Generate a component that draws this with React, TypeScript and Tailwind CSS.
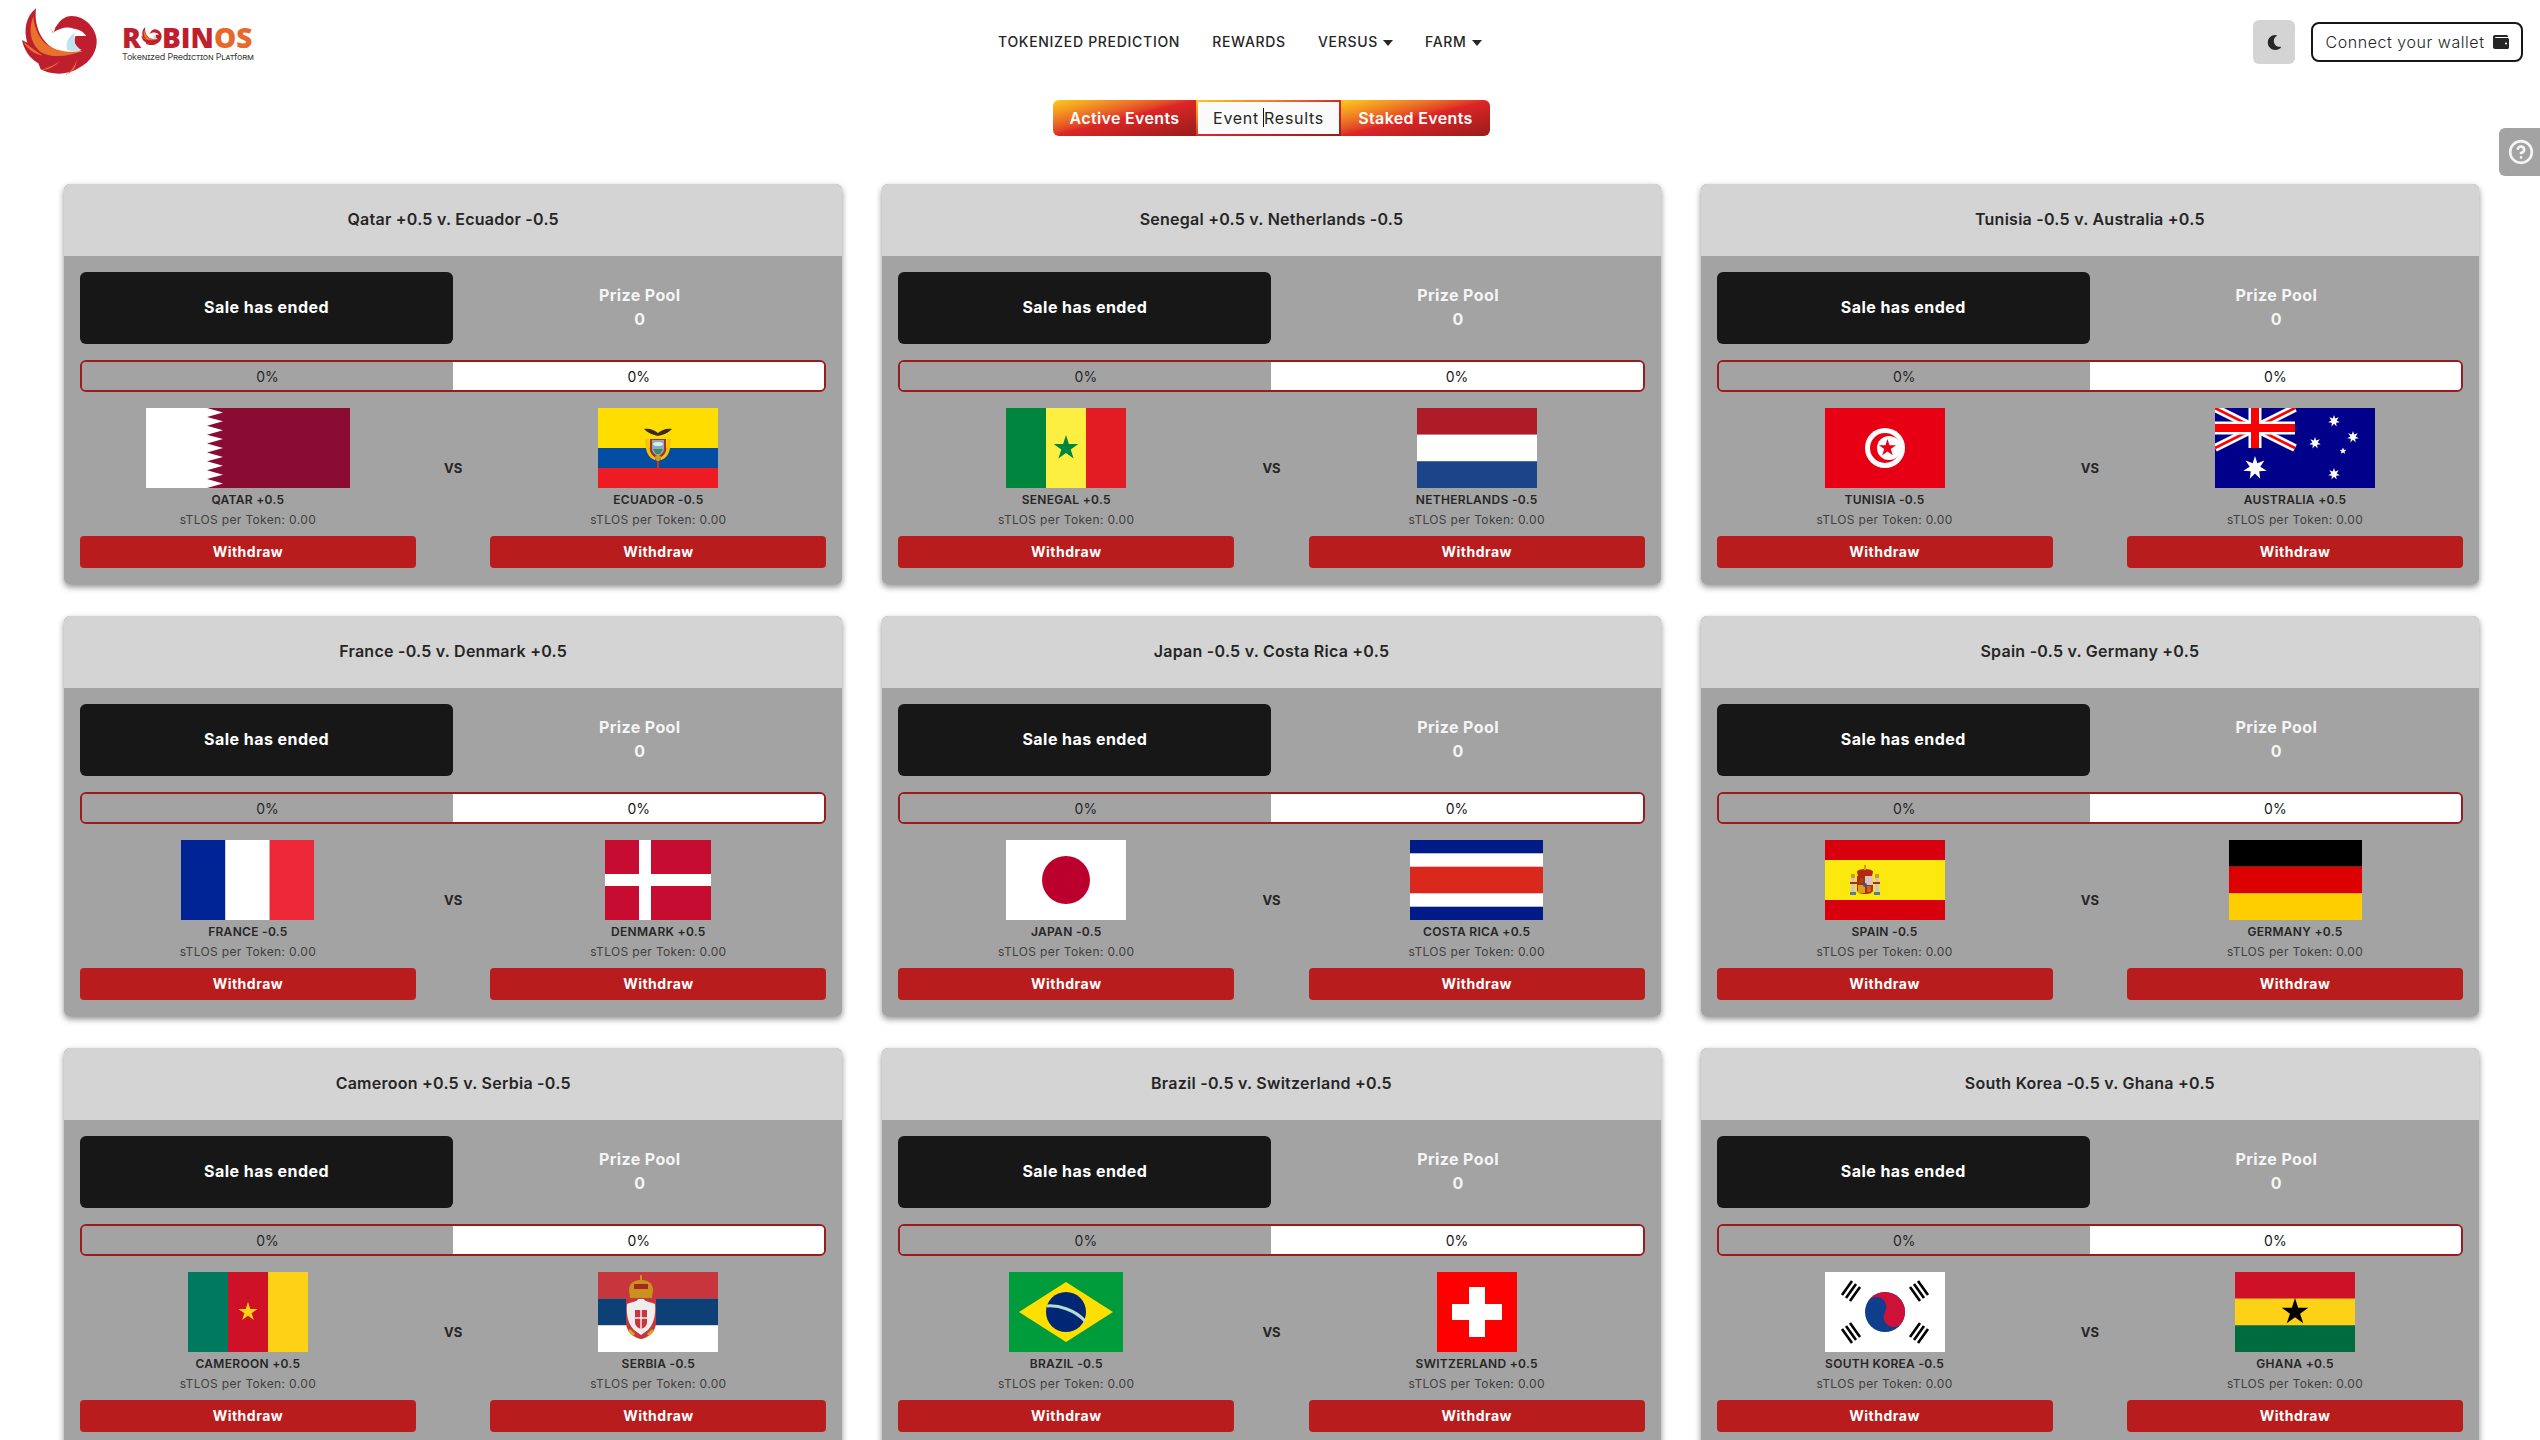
import { CircleHelp } from "lucide-react";
import { FaMoon, FaWallet } from "react-icons/fa";

function star(cx: number, cy: number, r: number, n = 5, inner = 0.382) {
  const pts: string[] = [];
  for (let i = 0; i < n * 2; i++) {
    const rad = i % 2 === 0 ? r : r * inner;
    const a = (Math.PI * i) / n - Math.PI / 2;
    pts.push(`${(cx + rad * Math.cos(a)).toFixed(2)},${(cy + rad * Math.sin(a)).toFixed(2)}`);
  }
  return pts.join(" ");
}

function Stripes({ w, colors, vertical }: { w: number; colors: string[]; vertical?: boolean }) {
  return (
    <>
      {colors.map((c, i) =>
        vertical ? (
          <rect key={i} x={(w / colors.length) * i} y={0} width={w / colors.length} height={80} fill={c} />
        ) : (
          <rect key={i} x={0} y={(80 / colors.length) * i} width={w} height={80 / colors.length} fill={c} />
        )
      )}
    </>
  );
}

function qatarEdge() {
  const pts = ["0,0", "61,0"];
  const step = 80 / 9;
  for (let i = 0; i < 9; i++) {
    pts.push(`77,${(step * i + step / 2).toFixed(2)}`);
    pts.push(`61,${(step * (i + 1)).toFixed(2)}`);
  }
  pts.push("0,80");
  return pts.join(" ");
}

const flags: Record<string, { w: number; draw: React.ReactNode }> = {
  qatar: {
    w: 204,
    draw: (
      <>
        <rect width="204" height="80" fill="#8a0c35" />
        <polygon points={qatarEdge()} fill="#fff" />
      </>
    ),
  },
  ecuador: {
    w: 120,
    draw: (
      <>
        <rect width="120" height="40" fill="#ffdd00" />
        <rect y="40" width="120" height="20" fill="#034ea2" />
        <rect y="60" width="120" height="20" fill="#ed1c24" />
        <path d="M46 21 C52 20 56 22 60 25 C64 22 68 20 74 21 C70 25 65 27 60 28 C55 27 50 25 46 21Z" fill="#3b2a1e" />
        <path d="M47 31 C47 42 50 50 57 52 L57 49 C52 46 51 40 51 31Z" fill="#f5c400" />
        <path d="M73 31 C73 42 70 50 63 52 L63 49 C68 46 69 40 69 31Z" fill="#f5c400" />
        <path d="M52 31 L68 31 L68 41 C68 46 64 49 60 50 C56 49 52 46 52 41Z" fill="#b52a2a" />
        <path d="M54 32 L66 32 L66 41 C66 44 63 47 60 48 C57 47 54 44 54 41Z" fill="#7fb0c4" />
        <ellipse cx="60" cy="36" rx="5" ry="2" fill="#e8e8e8" />
        <path d="M55 41 L65 41 L62 46 L58 46Z" fill="#3d8a5a" />
        <rect x="59" y="50" width="2" height="10" fill="#c0392b" />
        <circle cx="60" cy="50" r="3" fill="#d99a1c" />
      </>
    ),
  },
  senegal: {
    w: 120,
    draw: (
      <>
        <Stripes w={120} colors={["#00853f", "#fdef42", "#e31b23"]} vertical />
        <polygon points={star(60, 40, 13)} fill="#00853f" />
      </>
    ),
  },
  netherlands: {
    w: 120,
    draw: <Stripes w={120} colors={["#ae1c28", "#ffffff", "#1c4589"]} />,
  },
  tunisia: {
    w: 120,
    draw: (
      <>
        <rect width="120" height="80" fill="#e70013" />
        <circle cx="60" cy="40" r="20" fill="#fff" />
        <circle cx="60" cy="40" r="15" fill="#e70013" />
        <circle cx="64" cy="40" r="12" fill="#fff" />
        <polygon points={star(62.5, 40, 9)} fill="#e70013" />
      </>
    ),
  },
  australia: {
    w: 160,
    draw: (
      <>
        <rect width="160" height="80" fill="#00008b" />
        <path d="M0 0 L80 40 M80 0 L0 40" stroke="#fff" strokeWidth="8" />
        <path d="M0 0 L80 40 M80 0 L0 40" stroke="#ff0000" strokeWidth="2.6" />
        <path d="M40 0 V40 M0 20 H80" stroke="#fff" strokeWidth="13" />
        <path d="M40 0 V40 M0 20 H80" stroke="#ff0000" strokeWidth="8" />
        <polygon points={star(40, 60, 12, 7, 0.45)} fill="#fff" />
        <polygon points={star(119, 13, 6, 7, 0.45)} fill="#fff" />
        <polygon points={star(138, 29, 6, 7, 0.45)} fill="#fff" />
        <polygon points={star(100, 35, 6, 7, 0.45)} fill="#fff" />
        <polygon points={star(128, 43, 3.5, 5, 0.45)} fill="#fff" />
        <polygon points={star(119, 66, 6, 7, 0.45)} fill="#fff" />
      </>
    ),
  },
  france: {
    w: 133,
    draw: <Stripes w={133} colors={["#002395", "#ffffff", "#ed2939"]} vertical />,
  },
  denmark: {
    w: 106,
    draw: (
      <>
        <rect width="106" height="80" fill="#c60c30" />
        <rect x="34" width="12" height="80" fill="#fff" />
        <rect y="34" width="106" height="12" fill="#fff" />
      </>
    ),
  },
  japan: {
    w: 120,
    draw: (
      <>
        <rect width="120" height="80" fill="#fff" />
        <circle cx="60" cy="40" r="24" fill="#bc002d" />
      </>
    ),
  },
  costarica: {
    w: 133,
    draw: (
      <>
        <rect width="133" height="80" fill="#001a87" />
        <rect y="13.3" width="133" height="53.4" fill="#fff" />
        <rect y="26.7" width="133" height="26.6" fill="#da291c" />
      </>
    ),
  },
  spain: {
    w: 120,
    draw: (
      <>
        <rect width="120" height="80" fill="#d8000c" />
        <rect y="20" width="120" height="40" fill="#fbe90e" />
        <path d="M32 32 C32 28 48 28 48 32 L47 36 L33 36Z" fill="#b5290f" />
        <rect x="39" y="25" width="2" height="5" fill="#c8a11c" />
        <path d="M32 36 H48 V50 C48 53 44 54 40 54 C36 54 32 53 32 50Z" fill="#b5290f" />
        <rect x="40" y="36" width="8" height="9" fill="#d9c3c3" />
        <rect x="33" y="45" width="7" height="8" fill="#d9a21c" />
        <rect x="35" y="38" width="3" height="5" fill="#7a5a1c" />
        <rect x="42" y="46" width="4" height="6" fill="#c2661a" />
        <circle cx="40" cy="45" r="2" fill="#2c5a9c" />
        <rect x="26" y="35" width="4" height="19" fill="#c9c9c9" />
        <rect x="50" y="35" width="4" height="19" fill="#c9c9c9" />
        <rect x="26" y="34" width="4" height="4" fill="#c8a11c" />
        <rect x="50" y="34" width="4" height="4" fill="#c8a11c" />
        <rect x="25" y="52" width="6" height="3" fill="#5a7a9c" />
        <rect x="49" y="52" width="6" height="3" fill="#5a7a9c" />
        <rect x="25" y="42" width="7" height="2" fill="#b5290f" />
        <rect x="48" y="42" width="7" height="2" fill="#b5290f" />
      </>
    ),
  },
  germany: {
    w: 133,
    draw: <Stripes w={133} colors={["#000000", "#dd0000", "#ffce00"]} />,
  },
  cameroon: {
    w: 120,
    draw: (
      <>
        <Stripes w={120} colors={["#007a5e", "#ce1126", "#fcd116"]} vertical />
        <polygon points={star(60, 40, 10)} fill="#fcd116" />
      </>
    ),
  },
  serbia: {
    w: 120,
    draw: (
      <>
        <Stripes w={120} colors={["#c6363c", "#0c4076", "#ffffff"]} />
        <path d="M31 18 C31 10 38 8 43 8 C48 8 55 10 55 18 L54 26 H32Z" fill="#c8921c" />
        <path d="M36 12 H50 V17 H36Z" fill="#a8261f" />
        <rect x="42" y="3" width="2" height="6" fill="#c8921c" />
        <path d="M28 26 H58 V50 C58 60 50 66 43 67 C36 66 28 60 28 50Z" fill="#c6363c" />
        <path d="M29 32 C36 29 39 30 40 27 H46 C47 30 50 29 57 32 C58 42 56 52 50 58 L43 63 L36 58 C30 52 28 42 29 32Z" fill="#ededed" />
        <path d="M37 38 H49 V50 C49 54 46 56 43 57 C40 56 37 54 37 50Z" fill="#c6363c" />
        <path d="M43 38 V57 M37 46 H49" stroke="#eee" strokeWidth="1.5" />
        <path d="M31 58 L36 63 M55 58 L50 63" stroke="#d9a21c" strokeWidth="3" />
      </>
    ),
  },
  brazil: {
    w: 114,
    draw: (
      <>
        <rect width="114" height="80" fill="#009b3a" />
        <polygon points="10,40 57,10 104,40 57,70" fill="#fedf00" />
        <circle cx="57" cy="40" r="20" fill="#002776" />
        <path d="M38 34 C50 33 66 38 76 49" stroke="#b8dcc8" strokeWidth="3" fill="none" />
      </>
    ),
  },
  switzerland: {
    w: 80,
    draw: (
      <>
        <rect width="80" height="80" fill="#ff0000" />
        <rect x="32" y="15" width="16" height="50" fill="#fff" />
        <rect x="15" y="32" width="50" height="16" fill="#fff" />
      </>
    ),
  },
  korea: {
    w: 120,
    draw: (
      <>
        <rect width="120" height="80" fill="#fff" />
        <circle cx="60" cy="40" r="20" fill="#0f3f8c" />
        <path d="M40 40 A20 20 0 0 1 80 40 A10 10 0 0 1 60 40 A10 10 0 0 0 40 40Z" fill="#cd1139" transform="rotate(30 60 40)" />
        <g stroke="#000" strokeWidth="2.6" fill="none">
          <path d="M28 10 L18 24 M32 13 L22 27 M36 16 L26 30" transform="translate(-1 -1)" />
          <path d="M92 10 L102 24 M88 13 L98 27 M84 16 L94 30" transform="translate(1 -1)" />
          <path d="M28 70 L18 56 M32 67 L22 53 M36 64 L26 50" transform="translate(-1 1)" />
          <path d="M92 70 L102 56 M88 67 L98 53 M84 64 L94 50" transform="translate(1 1)" />
        </g>
      </>
    ),
  },
  ghana: {
    w: 120,
    draw: (
      <>
        <Stripes w={120} colors={["#ce1126", "#fcd116", "#006b3f"]} />
        <polygon points={star(60, 40, 14)} fill="#000" />
      </>
    ),
  },
};

function Flag({ name }: { name: string }) {
  const f = flags[name];
  return (
    <svg width={f.w} height={80} viewBox={`0 0 ${f.w} 80`} className="block">
      {f.draw}
    </svg>
  );
}

function Logo({ size = 110 }: { size?: number }) {
  return (
    <svg width={size} height={(size * 85) / 110} viewBox="0 0 330 255" className="block shrink-0">
      <path
        d="M78 25 C48 48 40 90 52 128 L36 120 C42 150 58 174 85 190 L92 208 C120 224 170 228 205 205 C245 185 262 150 260 120 C258 85 225 48 185 48 C165 48 145 60 130 98 L78 25Z"
        fill="#be1e2d"
      />
      <path
        d="M78 25 C70 90 105 150 170 160 L216 154 C196 150 190 130 196 108 L229 108 C218 92 205 88 192 86 C170 78 150 85 128 98 L100 40Z"
        fill="#fff"
      />
      <path d="M70 48 C55 90 60 122 85 150 C110 175 170 172 218 153 C170 160 125 150 100 125 C80 100 72 75 70 48Z" fill="#e8722c" />
      <path d="M172 150 C165 130 175 108 195 98 C190 115 190 135 215 150 C200 154 185 154 172 150Z" fill="#bfe3ee" />
      <path d="M135 85 C150 62 170 58 190 62 C170 68 155 75 135 85Z" fill="#be1e2d" />
      <path d="M40 125 C55 150 75 162 98 167 C75 150 60 140 40 125Z" fill="#e8722c" />
      <path d="M90 210 C110 205 135 195 150 183 C135 200 115 210 90 210Z" fill="#e8722c" />
      <path d="M165 225 C185 215 195 195 200 180 C198 205 190 215 165 225Z" fill="#e8722c" />
    </svg>
  );
}

type Side = { flag: string; label: string };
type Match = { title: string; a: Side; b: Side };

const matches: Match[] = [
  { title: "Qatar +0.5 v. Ecuador -0.5", a: { flag: "qatar", label: "QATAR +0.5" }, b: { flag: "ecuador", label: "ECUADOR -0.5" } },
  { title: "Senegal +0.5 v. Netherlands -0.5", a: { flag: "senegal", label: "SENEGAL +0.5" }, b: { flag: "netherlands", label: "NETHERLANDS -0.5" } },
  { title: "Tunisia -0.5 v. Australia +0.5", a: { flag: "tunisia", label: "TUNISIA -0.5" }, b: { flag: "australia", label: "AUSTRALIA +0.5" } },
  { title: "France -0.5 v. Denmark +0.5", a: { flag: "france", label: "FRANCE -0.5" }, b: { flag: "denmark", label: "DENMARK +0.5" } },
  { title: "Japan -0.5 v. Costa Rica +0.5", a: { flag: "japan", label: "JAPAN -0.5" }, b: { flag: "costarica", label: "COSTA RICA +0.5" } },
  { title: "Spain -0.5 v. Germany +0.5", a: { flag: "spain", label: "SPAIN -0.5" }, b: { flag: "germany", label: "GERMANY +0.5" } },
  { title: "Cameroon +0.5 v. Serbia -0.5", a: { flag: "cameroon", label: "CAMEROON +0.5" }, b: { flag: "serbia", label: "SERBIA -0.5" } },
  { title: "Brazil -0.5 v. Switzerland +0.5", a: { flag: "brazil", label: "BRAZIL -0.5" }, b: { flag: "switzerland", label: "SWITZERLAND +0.5" } },
  { title: "South Korea -0.5 v. Ghana +0.5", a: { flag: "korea", label: "SOUTH KOREA -0.5" }, b: { flag: "ghana", label: "GHANA +0.5" } },
];

function Team({ side }: { side: Side }) {
  return (
    <div className="flex w-[45%] flex-col items-center">
      <Flag name={side.flag} />
      <p className="mt-[3px] text-[12px] leading-[18px] font-semibold tracking-[0.3px] text-[#262626]">{side.label}</p>
      <p className="mt-[2px] text-[12px] leading-[18px] tracking-[0.35px] text-[#404040]">sTLOS per Token: 0.00</p>
    </div>
  );
}

function MatchCard({ match }: { match: Match }) {
  return (
    <div className="h-[400px] overflow-hidden rounded-md bg-[#a3a3a3] shadow-[0_3px_6px_rgba(0,0,0,0.45)]">
      <div className="flex h-[72px] items-center justify-center bg-[#d4d4d4] pb-[2px] text-[16px] font-semibold tracking-[0.25px] text-[#262626]">
        {match.title}
      </div>
      <div className="px-4 pt-4">
        <div className="flex h-[72px]">
          <div className="flex w-1/2 items-center justify-center rounded-md bg-[#171717] pb-[2px] text-[16px] font-bold tracking-[0.45px] text-white">
            Sale has ended
          </div>
          <div className="flex w-1/2 flex-col items-center justify-center pb-[2px] text-[16px] leading-6 font-bold tracking-[0.4px] text-[#f5f5f5]">
            <span>Prize Pool</span>
            <span>0</span>
          </div>
        </div>
        <div className="mt-4 flex h-8 overflow-hidden rounded-md border-2 border-[#991b1b] text-[14px]">
          <div className="flex w-1/2 items-center justify-center bg-[#a3a3a3] text-[#262626]">0%</div>
          <div className="flex w-1/2 items-center justify-center bg-white text-[#171717]">0%</div>
        </div>
        <div className="mt-4 flex h-[120px] items-center">
          <Team side={match.a} />
          <div className="w-[10%] pt-[2px] text-center text-[13px] font-bold text-[#262626]">VS</div>
          <Team side={match.b} />
        </div>
        <div className="mt-2 flex justify-between">
          <button className="h-8 w-[45%] rounded-[4px] bg-[#b91c1c] pb-[1px] text-[14px] font-bold tracking-[0.5px] text-white">Withdraw</button>
          <button className="h-8 w-[45%] rounded-[4px] bg-[#b91c1c] pb-[1px] text-[14px] font-bold tracking-[0.5px] text-white">Withdraw</button>
        </div>
      </div>
    </div>
  );
}

function Caret() {
  return <span className="ml-[5px] inline-block h-0 w-0 border-x-[5px] border-t-[6px] border-x-transparent border-t-[#262626] align-middle" />;
}

export default function App() {
  return (
    <div className="relative h-screen overflow-hidden bg-white [font-family:Inter,sans-serif]">
      <header className="relative flex h-[85px] items-start px-[10px]">
        <Logo />
        <div className="ml-[2px] pt-[24px]">
          <div className="flex h-[26px] items-center text-[28px] leading-[26px] font-extrabold [font-family:'Open_Sans',sans-serif]">
            <span className="text-[#be1e2d]">R</span>
            <span className="-mr-[6px] -ml-[3px]">
              <Logo size={30} />
            </span>
            <span className="text-[#be1e2d]">BIN</span>
            <span className="text-[#e8682c]">OS</span>
          </div>
          <p className="mt-[2px] text-[9px] leading-[10px] tracking-[-0.2px] text-[#404040] [font-variant-caps:small-caps]">
            Tokenized Prediction Platform
          </p>
        </div>
        <nav className="absolute top-[32px] left-[998px] flex gap-8 text-[14px] leading-5 font-medium tracking-[0.7px] text-[#262626]">
          <span>TOKENIZED PREDICTION</span>
          <span>REWARDS</span>
          <span>
            VERSUS
            <Caret />
          </span>
          <span>
            FARM
            <Caret />
          </span>
        </nav>
        <div className="absolute top-[20px] right-[17px] flex items-center gap-4">
          <button className="flex h-[44px] w-[42px] items-center justify-center rounded-md bg-[#d4d4d4] text-[#262626]">
            <FaMoon className="h-[15px] w-[15px]" />
          </button>
          <button className="flex h-[40px] w-[212px] items-center justify-center gap-2 rounded-lg border-2 border-[#171717] pb-[1px] text-[16px] font-light tracking-[0.55px] text-[#262626]">
            Connect your wallet
            <FaWallet className="h-4 w-4 text-[#262626]" />
          </button>
        </div>
      </header>

      <div className="mt-[15px] flex justify-center pl-[3px]">
        <div className="flex h-9 w-[437px] overflow-hidden rounded-md text-[16px]">
          <div className="flex w-[143px] items-center justify-center bg-gradient-to-br from-[#facc15] via-[#dc2626] to-[#991b1b] pb-[1px] font-semibold tracking-[0.35px] text-white">
            Active Events
          </div>
          <div className="w-[145px] bg-gradient-to-br from-[#facc15] via-[#dc2626] to-[#991b1b] p-[2px]">
            <div className="relative flex h-full items-center justify-center bg-[#fafafa] pb-[1px] tracking-[0.7px] text-[#262626]">
              Event Results
              <span className="absolute top-[6px] left-[65px] h-[19px] w-px bg-[#171717]" />
            </div>
          </div>
          <div className="flex flex-1 items-center justify-center bg-gradient-to-br from-[#facc15] via-[#dc2626] to-[#991b1b] pb-[1px] font-semibold tracking-[0.35px] text-white">
            Staked Events
          </div>
        </div>
      </div>

      <main className="mt-[48px] ml-16 grid w-[2415px] grid-cols-3 gap-x-10 gap-y-8">
        {matches.map((m) => (
          <MatchCard key={m.title} match={m} />
        ))}
      </main>

      <div className="absolute top-[128px] right-0 flex h-12 w-[41px] items-center justify-start rounded-l-md bg-[#a3a3a3] pl-[9px] text-[#f5f5f5]">
        <CircleHelp className="h-[26px] w-[26px]" strokeWidth={2.4} />
      </div>
    </div>
  );
}
